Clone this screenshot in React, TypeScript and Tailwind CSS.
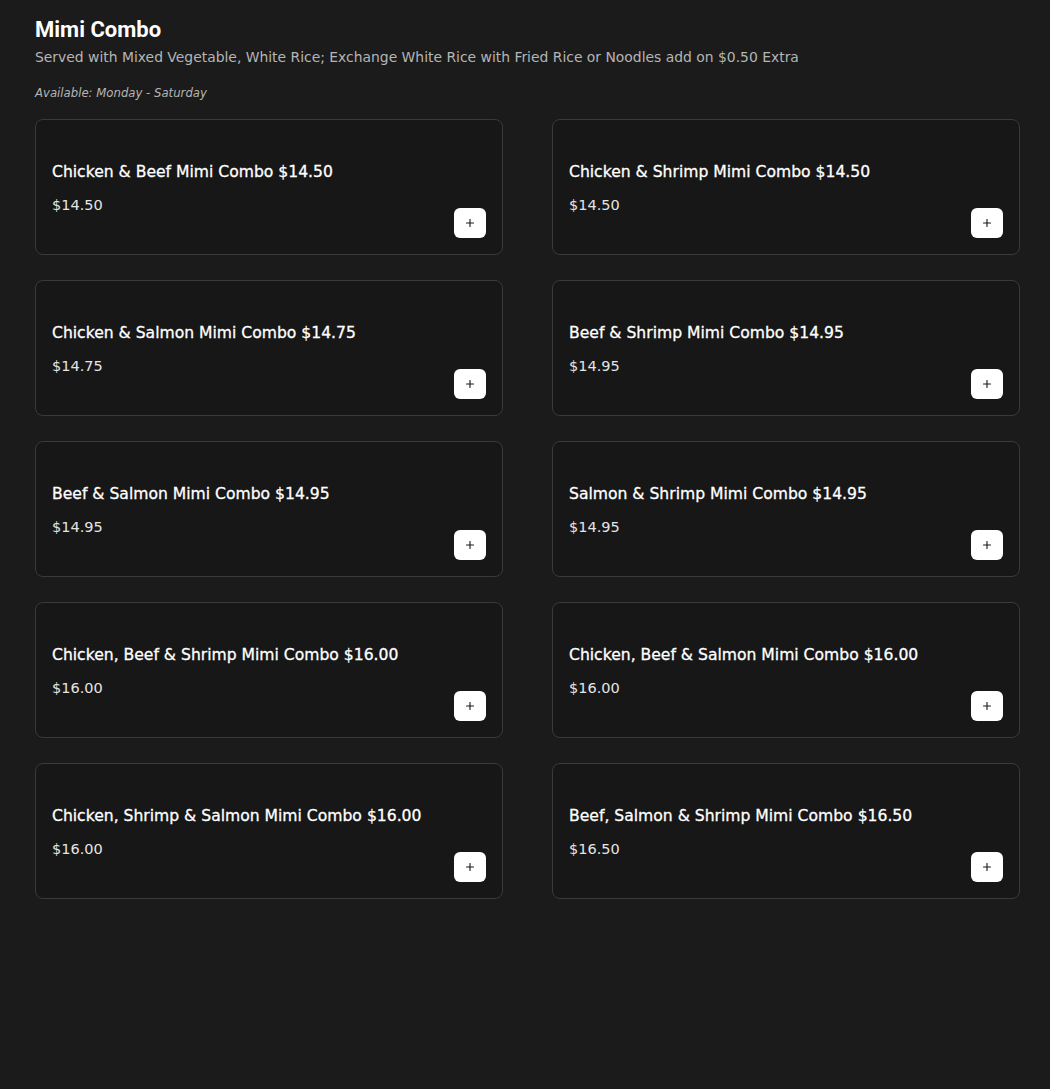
import { Plus } from 'lucide-react';

const combos = [
  { name: 'Chicken & Beef Mimi Combo', price: '$14.50' },
  { name: 'Chicken & Shrimp Mimi Combo', price: '$14.50' },
  { name: 'Chicken & Salmon Mimi Combo', price: '$14.75' },
  { name: 'Beef & Shrimp Mimi Combo', price: '$14.95' },
  { name: 'Beef & Salmon Mimi Combo', price: '$14.95' },
  { name: 'Salmon & Shrimp Mimi Combo', price: '$14.95' },
  { name: 'Chicken, Beef & Shrimp Mimi Combo', price: '$16.00' },
  { name: 'Chicken, Beef & Salmon Mimi Combo', price: '$16.00' },
  { name: 'Chicken, Shrimp & Salmon Mimi Combo', price: '$16.00' },
  { name: 'Beef, Salmon & Shrimp Mimi Combo', price: '$16.50' },
];

const body = { fontFamily: '"DejaVu Sans", "Open Sans", sans-serif' };

export default function App() {
  return (
    <div className="min-h-[1089px] w-full bg-[#1b1b1b] pl-[35px] pr-[30px] pt-[15px]" style={body}>
      <h2 className="text-[22px] font-bold leading-[30px] text-white" style={{ fontFamily: 'Roboto, sans-serif' }}>
        Mimi Combo
      </h2>
      <p className="text-[13.9px] leading-[24px] text-[#b5b5b5]">
        Served with Mixed Vegetable, White Rice; Exchange White Rice with Fried Rice or Noodles add on $0.50 Extra
      </p>
      <p className="mt-[16px] text-[11.7px] italic leading-[16px] text-[#b5b5b5]">Available: Monday - Saturday</p>

      <div className="mt-[18px] grid grid-cols-2 gap-x-[49px] gap-y-[25px]">
        {combos.map((c) => (
          <div
            key={c.name}
            className="flex h-[136px] items-end justify-between rounded-lg border border-[#3a3a3a] bg-[#171717] p-4"
          >
            <div className="self-start pt-[24px]">
              <p className="text-[15.6px] leading-[24px] text-white [-webkit-text-stroke:0.3px_white]">
                {c.name} {c.price}
              </p>
              <p className="mt-[9px] text-[14.5px] leading-[24px] text-[#e5e5e5]">{c.price}</p>
            </div>
            <button className="flex h-[30px] w-[32px] items-center justify-center rounded-md bg-white">
              <Plus size={12} strokeWidth={2.25} className="text-[#1a1a1a]" />
            </button>
          </div>
        ))}
      </div>
    </div>
  );
}
